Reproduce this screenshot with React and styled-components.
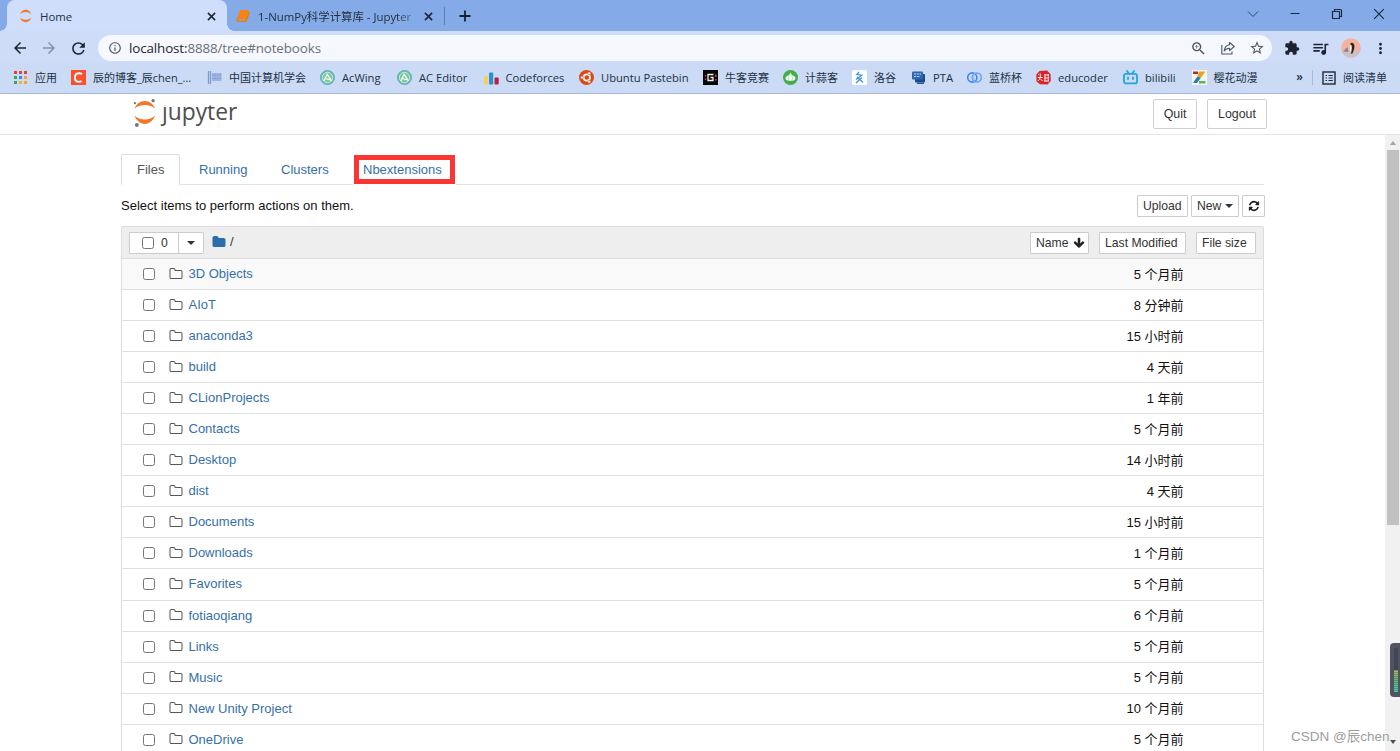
import React from "react";
import styled, { createGlobalStyle } from "styled-components";
import {
  MdArrowBack,
  MdArrowForward,
  MdRefresh,
  MdInfoOutline,
  MdZoomIn,
  MdStarBorder,
  MdExtension,
  MdQueueMusic,
  MdMoreVert,
} from "react-icons/md";

const GlobalStyle = createGlobalStyle`
  *, *::before, *::after { box-sizing: border-box; }
  body { margin: 0; background: #fff; overflow: hidden; }
  svg { display: block; flex: none; }
`;

const uiFont = `"Open Sans", "Noto Sans CJK SC", sans-serif`;
const pageFont = `"Liberation Sans", "Noto Sans CJK SC", sans-serif`;

const Window = styled.div`
  position: relative;
  display: flex;
  flex-direction: column;
  width: 1400px;
  height: 751px;
  overflow: hidden;
  background: #fff;
  font-family: ${uiFont};
  color: #22303f;
`;

/* ---------- tab strip ---------- */

const TabStrip = styled.div`
  display: flex;
  height: 31px;
  flex: none;
  background: #84abe8;
  padding-left: 7px;
`;

const Tab = styled.div`
  position: relative;
  display: flex;
  align-items: center;
  width: ${(p) => p.$width}px;
  height: 31px;
  padding: 1px 11px 0 ${(p) => (p.$active ? 11 : 9)}px;
  border-radius: 8px 8px 0 0;
  background: ${(p) => (p.$active ? "#cfdefa" : "transparent")};
  font-size: 11.4px;
  &::before, &::after {
    content: "";
    display: ${(p) => (p.$active ? "block" : "none")};
    position: absolute;
    bottom: 0;
    width: 7px;
    height: 7px;
  }
  &::before { left: -7px; background: radial-gradient(circle at 0 0, transparent 6.5px, #cfdefa 7px); }
  &::after { right: -7px; background: radial-gradient(circle at 100% 0, transparent 6.5px, #cfdefa 7px); }
`;

const TabTitle = styled.span`
  flex: 1;
  margin-left: ${(p) => p.$gap}px;
  white-space: nowrap;
  ${(p) => p.$fade && "mask-image: linear-gradient(90deg, #000 84%, transparent 99%);"}
`;

const TabDivider = styled.div`
  width: 1px;
  height: 18px;
  margin: 7px 14px 0 0;
  background: #5f7ba8;
`;

const NewTab = styled.div`
  padding-top: 10px;
`;

const WindowControls = styled.div`
  display: flex;
  margin-left: auto;
  gap: 30px;
  padding: 8px 15px 0 0;
`;

/* ---------- toolbar ---------- */

const Toolbar = styled.div`
  display: flex;
  align-items: center;
  height: 32px;
  flex: none;
  padding: 2px 11px 0 11px;
  background: #cedcf8;
`;

const NavButtons = styled.div`
  display: flex;
  align-items: center;
  gap: 11px;
  width: 87px;
  flex: none;
`;

const Omnibox = styled.div`
  display: flex;
  align-items: center;
  width: 1174px;
  flex: none;
  height: 26px;
  padding: 0 7px 0 10px;
  border-radius: 13px;
  background: #f5f8ff;
`;

const Url = styled.div`
  flex: 1;
  margin-left: 7px;
  padding-bottom: 1px;
  font-size: 13.4px;
  letter-spacing: -0.12px;
  color: #6a7079;
  span { color: #1f262e; }
`;

const OmniActions = styled.div`
  display: flex;
  align-items: center;
  gap: 13px;
  color: #4b5563;
`;

const ToolbarActions = styled.div`
  display: flex;
  align-items: center;
  margin-left: 12px;
  gap: 11px;
  color: #1d2430;
`;

/* ---------- bookmarks ---------- */

const BookmarkBar = styled.div`
  display: flex;
  align-items: center;
  height: 31px;
  flex: none;
  padding: 0 13px 1px 13px;
  background: #cbdbf5;
  border-bottom: 1px solid #a5b9da;
`;

const BookmarkItem = styled.div`
  display: flex;
  align-items: center;
  width: ${(p) => p.$width}px;
  flex: none;
  gap: 7px;
  white-space: nowrap;
`;

const BookmarkLabel = styled.span`
  font-size: ${(p) => (p.$cjk ? 11 : 11.2)}px;
  padding-bottom: ${(p) => (p.$cjk ? 2 : 0)}px;
`;

const BarEnd = styled.div`
  display: flex;
  align-items: center;
  margin-left: auto;
`;

const More = styled.span`
  font-size: 12px;
  font-weight: 600;
  padding-bottom: 3px;
  margin-right: 9px;
`;

const BarDivider = styled.span`
  width: 1px;
  height: 15px;
  margin-right: 9px;
  background: #a4bade;
`;

/* ---------- notebook page ---------- */

const PageHeader = styled.header`
  display: flex;
  align-items: flex-start;
  height: 41px;
  flex: none;
  padding: 5px 133px 0 132px;
  border-bottom: 1px solid #e4e4e4;
`;

const Wordmark = styled.div`
  margin: -4px 0 0 5px;
  font: 500 22.8px/34px "Open Sans", sans-serif;
  color: #4e4e4e;
  clip-path: inset(10.5px 0 0 -4px);
`;

const LogoSlot = styled.div`
  margin-top: -1px;
`;

const HeaderButtons = styled.div`
  display: flex;
  gap: 10px;
  margin-left: auto;
`;

const HeaderButton = styled.button`
  width: ${(p) => p.$width}px;
  height: 30px;
  padding: 0 0 1px;
  border: 1px solid #d0d0d0;
  border-radius: 2px;
  background: #fff;
  color: #333;
  font: 12.4px ${pageFont};
`;

const Content = styled.main`
  display: flex;
  flex-direction: column;
  flex: 1;
  min-height: 0;
  width: 1143px;
  margin-left: 121px;
  padding-top: 19px;
  font: 13px ${pageFont};
`;

const NavTabs = styled.nav`
  display: flex;
  flex: none;
  height: 31px;
  border-bottom: 1px solid #e2e2e2;
`;

const NavTab = styled.a`
  display: flex;
  align-items: center;
  width: ${(p) => p.$width}px;
  height: 31px;
  padding-left: 15px;
  margin-right: 3px;
  border: 1px solid ${(p) => (p.$active ? "#ddd" : "transparent")};
  border-bottom-color: ${(p) => (p.$active ? "#fff" : "transparent")};
  border-radius: 2px 2px 0 0;
  color: ${(p) => (p.$active ? "#555" : "#3670a9")};
`;

const Highlight = styled.a`
  display: flex;
  align-items: center;
  width: 101px;
  height: 29px;
  margin: 1px 0 0 8px;
  padding-left: 4px;
  border: 5px solid #fa3532;
  outline: 1px solid #fff;
  background: #fff;
  color: #3670a9;
  white-space: nowrap;
`;

const ActionRow = styled.div`
  display: flex;
  flex: none;
  align-items: center;
  height: 41px;
  color: #111;
`;

const ButtonGroup = styled.div`
  display: flex;
  gap: ${(p) => p.$gap}px;
  margin-left: auto;
  margin-right: ${(p) => p.$shift || 0}px;
`;

const SmallButton = styled.button`
  display: flex;
  align-items: center;
  gap: 4px;
  width: ${(p) => p.$width}px;
  height: 22px;
  padding: 0 0 0 5px;
  border: 1px solid #ccc;
  border-radius: 1px;
  background: #fff;
  color: #333;
  font: 12.2px ${pageFont};
  white-space: nowrap;
`;

const Caret = styled.i`
  border: 4px solid transparent;
  border-top-color: #333;
  border-bottom: 0;
`;

const List = styled.div`
  flex: 1;
  min-height: 0;
  overflow: hidden;
  border: 1px solid #ddd;
  border-bottom: 0;
  border-radius: 2px 2px 0 0;
`;

const ListHeader = styled.div`
  display: flex;
  align-items: center;
  height: 32px;
  padding: 0 7px;
  background: #eee;
  border-bottom: 1px solid #ddd;
`;

const SelectGroup = styled.div`
  display: flex;
  width: 75px;
  height: 22px;
  border: 1px solid #ccc;
  border-radius: 1px;
  background: #fff;
  font-size: 12.2px;
  color: #333;
`;

const SelectAll = styled.div`
  display: flex;
  align-items: center;
  gap: 7px;
  width: 49px;
  padding-left: 12px;
  border-right: 1px solid #ccc;
`;

const SelectToggle = styled.div`
  display: flex;
  flex: 1;
  align-items: center;
  justify-content: center;
`;

const Crumbs = styled.div`
  display: flex;
  align-items: center;
  gap: 4px;
  margin-left: 8px;
  padding-bottom: 2px;
  color: #333;
`;

const CheckBox = styled.span`
  width: 12px;
  height: 12px;
  flex: none;
  border: 1px solid #767676;
  border-radius: 2.5px;
  background: #fff;
`;

const Row = styled.div`
  display: flex;
  align-items: center;
  height: 31.06px;
  padding: 0 79.5px 0 21px;
  background: ${(p) => (p.$hover ? "#f9f9f9" : "#fff")};
  border-bottom: 1px solid #e0e0e0;
`;

const RowIcon = styled.span`
  margin: 0 5.5px 1px 14px;
`;

const RowName = styled.a`
  padding-bottom: 1px;
  color: #3670a9;
`;

const RowTime = styled.span`
  margin-left: auto;
  padding-bottom: 2px;
  color: #111;
`;

/* ---------- overlays ---------- */

const ScrollTrack = styled.div`
  position: absolute;
  top: 135px;
  right: 0;
  width: 15px;
  height: 616px;
  display: flex;
  flex-direction: column;
  align-items: center;
  background: #f1f1f1;
`;

const ScrollArrow = styled.i`
  margin: ${(p) => (p.$down ? "auto 0 7px" : "6px 0 5px")};
  border: 3.5px solid transparent;
  ${(p) => (p.$down
    ? "border-top: 4px solid #505050; border-bottom: 0;"
    : "border-bottom: 4px solid #a3a3a3; border-top: 0;")}
`;

const ScrollThumb = styled.div`
  width: 12px;
  height: 375px;
  background: #c1c1c1;
`;

const Meter = styled.div`
  position: absolute;
  top: 643px;
  right: 0;
  width: 10px;
  height: 54px;
  padding: 5px 2px 5px 4px;
  border-radius: 4px 0 0 4px;
  background: #50545f;
`;

const MeterBar = styled.div`
  height: 44px;
  background:
    repeating-linear-gradient(0deg, transparent 0 1px, rgba(60, 64, 78, 0.35) 1px 2px),
    linear-gradient(180deg, #42465a 50%, #b3b95c 50%, #62b77e 72%, #49cba8 100%);
`;

const Watermark = styled.div`
  position: absolute;
  left: 1291px;
  top: 727px;
  font: 13.5px/20px ${pageFont};
  color: #9c9c9c;
  text-shadow: 0 0 1px #fff;
  white-space: nowrap;
`;

/* ---------- drawings ---------- */

const JupyterMark = ({ width, height, moons }) => (
  <svg width={width} height={height} viewBox="0 0 24 28">
    <path d="M2.500 10.300C4 5.800 7.800 2.900 12.300 2.900s8.300 2.900 9.800 7.400C19.800 8 16.200 6.800 12.300 6.800S4.800 8 2.500 10.300Z" fill="#f37726" />
    <path d="M2.500 17.200C4 21.700 7.800 25 12.300 25s8.300-3.300 9.800-7.800c-2.300 2.300-5.900 3.500-9.800 3.500S4.800 19.500 2.500 17.200Z" fill="#f37726" />
    {moons && (
      <g fill="#767677">
        <circle cx="20.300" cy="2.600" r="1.600" />
        <circle cx="2.700" cy="5" r="1.100" />
        <circle cx="4.600" cy="26" r="1.900" />
      </g>
    )}
  </svg>
);

const BookIcon = () => (
  <svg width="14" height="14" viewBox="0 0 14 14">
    <path d="M4 1h9l-2.500 9.500H2Q1 10.500 1.300 9.300Z" fill="#f58316" />
    <path d="M1.200 9.500Q.6 12.300 2.500 12.300H10l3.300-9" fill="none" stroke="#e57c15" strokeWidth="1.500" />
  </svg>
);

const Cross = ({ size, weight }) => (
  <svg width={size} height={size} viewBox="0 0 10 10">
    <path d="M1 1 9 9M9 1 1 9" stroke="#1b2532" strokeWidth={weight} />
  </svg>
);

const ShareIcon = () => (
  <svg width="16" height="16" viewBox="0 0 16 16" fill="none" stroke="currentColor" strokeWidth="1.100" strokeLinejoin="round">
    <path d="M1.800 5V14H12V11.500" />
    <path d="M9.500 2.500 14.300 6.500 9.500 10.500V8.200C7 8.200 5.500 9 4.200 11 4.500 7.500 6.500 5.200 9.500 4.800Z" />
  </svg>
);

const Avatar = () => (
  <svg width="20" height="20" viewBox="0 0 20 20">
    <circle cx="10" cy="10" r="9.800" fill="#f4b29c" />
    <path d="M1 14 7 8.500 8 14 13 13 19.200 12.500A9.800 9.800 0 0 1 5 18.500Z" fill="#c9c2c6" />
    <path d="M2 13.500 6.500 9 7.500 14Z" fill="#94808a" />
    <path d="M9 6Q11 3.500 12.800 6T11.500 15.500L9.800 15.800Q11.800 9.500 10.500 7Z" fill="#2b2325" />
    <path d="M8.800 7.500Q10.500 7 10.300 10T9 14.500Z" fill="#fff" />
  </svg>
);

const FA = {
  folderOpen: "M1600 1312v-704q0-40-28-68t-68-28h-704q-40 0-68-28t-28-68v-64q0-40-28-68t-68-28h-320q-40 0-68 28t-28 68v960q0 40 28 68t68 28h1216q40 0 68-28t28-68zm128-704v704q0 92-66 158t-158 66h-1216q-92 0-158-66t-66-158v-960q0-92 66-158t158-66h320q92 0 158 66t66 158v32h672q92 0 158 66t66 158z",
  folder: "M1728 608v704q0 92-66 158t-158 66h-1216q-92 0-158-66t-66-158v-960q0-92 66-158t158-66h320q92 0 158 66t66 158v32h672q92 0 158 66t66 158z",
  arrowDown: "M1675 832q0 53-37 90l-651 652q-39 37-91 37-53 0-90-37l-651-652q-38-36-38-90 0-53 38-91l74-75q39-37 91-37 53 0 90 37l294 294v-704q0-52 38-90t90-38h128q52 0 90 38t38 90v704l294-294q37-37 90-37 52 0 91 37l75 75q37 39 37 91z",
  refresh: "M1639 1056q0 5-1 7-64 268-268 434.500t-478 166.500q-146 0-282.500-55t-243.500-157l-129 129q-19 19-45 19t-45-19-19-45v-448q0-26 19-45t45-19h448q26 0 45 19t19 45-19 45l-137 137q71 66 161 102t187 36q134 0 250-65t186-179q11-17 53-117 8-23 30-23h192q13 0 22.500 9.500t9.500 22.500zm25-800v448q0 26-19 45t-45 19h-448q-26 0-45-19t-19-45 19-45l138-138q-148-137-349-137-134 0-250 65t-186 179q-11 17-53 117-8 23-30 23h-199q-13 0-22.500-9.500t-9.500-22.500v-7q65-268 270-434.500t480-166.500q146 0 284 55.500t245 156.500l130-129q19-19 45-19t45 19 19 45z",
};

const Glyph = ({ name, size, color }) => (
  <svg width={size} height={size} viewBox="0 0 1792 1792">
    <path d={FA[name]} fill={color} />
  </svg>
);

const siteIcons = {
  apps: (
    <g>
      {["#e0433a", "#e0433a", "#e0433a", "#37a852", "#3f83f0", "#f2a529", "#37a852", "#f2b22b", "#f2a529"].map((c, i) => (
        <rect key={i} x={1 + (i % 3) * 5} y={1 + Math.floor(i / 3) * 5} width="3" height="3" fill={c} />
      ))}
    </g>
  ),
  csdn: (
    <g>
      <rect width="15" height="15" fill="#f9502d" />
      <path d="M11 4.300Q9.800 3.300 8.200 3.300C5.500 3.300 4 5 3.900 7.500S5.300 11.800 7.700 11.800Q9.500 11.800 10.600 10.900" fill="none" stroke="#fff" strokeWidth="1.900" />
    </g>
  ),
  ccf: (
    <g>
      <path d="M1.500 1V14M3.500 1V14" stroke="#7f9acb" strokeWidth="1.300" />
      <rect x="5" y="3" width="9.500" height="8" fill="#9db4e2" />
      <path d="M5 5H14M5 8.500H14" stroke="#7d98d0" strokeDasharray="1.500 1" />
    </g>
  ),
  acwing: (
    <g>
      <circle cx="7.500" cy="7.500" r="7" fill="#64bf9a" stroke="#69a6cf" />
      <circle cx="7.500" cy="7.500" r="5.200" fill="#79c99b" stroke="#d9f3e6" strokeWidth=".8" />
      <path d="M3.800 11 7.200 4.200 10.800 9.800M5.500 8.500 12 10.500" fill="none" stroke="#fff" strokeWidth="1.300" />
    </g>
  ),
  codeforces: (
    <g>
      <rect x="0" y="6" width="4" height="8.500" rx="1" fill="#f9cf58" />
      <rect x="5" y="2.500" width="4.200" height="12" rx="1" fill="#2c8fd1" />
      <rect x="10.500" y="7.500" width="4.200" height="7" rx="1" fill="#b9213c" />
    </g>
  ),
  ubuntu: (
    <g>
      <circle cx="7.500" cy="7.500" r="7.500" fill="#dd4814" />
      <circle cx="7.800" cy="7.500" r="3.200" fill="none" stroke="#fff" strokeWidth="1.700" />
      <g fill="#fff" stroke="#dd4814" strokeWidth=".6">
        <circle cx="3" cy="7.500" r="1.500" />
        <circle cx="10.200" cy="3.300" r="1.500" />
        <circle cx="10.200" cy="11.700" r="1.500" />
      </g>
    </g>
  ),
  nowcoder: (
    <g>
      <rect width="15" height="15" fill="#080808" />
      <path d="M10.500 4.500H5V10.500H10V7.500H7.500" fill="none" stroke="#f1eeee" strokeWidth="1.300" />
      <path d="M2.500 5V6.500M2.500 8.500V10M12.800 4.500V7M12.800 9V10.500" stroke="#d94b55" strokeWidth="1.300" />
    </g>
  ),
  jisuanke: (
    <g>
      <circle cx="7.500" cy="7.500" r="7.500" fill="#43ae49" />
      <path d="M7.500 2.500Q8 5 10.500 5.700 13.200 6.800 12.200 9.200C11 11.500 4 11.500 2.800 9.200Q1.800 6.800 4.500 5.700 7 5 7.500 2.500Z" fill="#f2fff2" />
      <path d="M6 5.500Q4.800 8 6 10.800M9 5.500Q10.200 8 9 10.800" fill="none" stroke="#9fd8a2" strokeWidth=".6" />
    </g>
  ),
  luogu: (
    <g>
      <rect width="15" height="15" rx="1.500" fill="#fbfdff" />
      <path d="M7 2 4.800 4.500 9.800 5.200 4 9.500M5 7 11 12.500M9.800 7.500 4 13" fill="none" stroke="#3f8ed8" strokeWidth="1.200" />
    </g>
  ),
  pta: (
    <g>
      <rect x="4" y="4" width="10" height="8.500" rx="1" fill="#1f4c86" />
      <rect x="1" y="1.500" width="11" height="8" rx="1" fill="#2e68ae" />
      <path d="M3 4H10M3 6.500H9" stroke="#c8dcf6" strokeDasharray="2 .8" />
      <path d="M6 12.500H13V14H6Z" fill="#255a9e" />
    </g>
  ),
  lanqiao: (
    <g fill="none" strokeWidth="1.600">
      <circle cx="5.300" cy="7.500" r="4.600" stroke="#3e86ef" />
      <circle cx="9.800" cy="7.500" r="4.500" stroke="#66a3f6" />
      <path d="M7.500 3.500Q5.500 7.500 7.500 11.500" stroke="#8db9f8" strokeWidth="1" />
    </g>
  ),
  educoder: (
    <g>
      <path d="M3.500 1 11 .5 14.500 4 14.800 11 11.500 14.500 4 14.300.500 11.500.300 4.500Z" fill="#dc2328" />
      <path d="M4.300 3.500V7Q4 9.500 1.800 11M1.800 7.500H6.800M4.800 9.200 6.500 11M2.200 4 3.200 5M8 5H13M8 8H13M8 11H13M9 4V11.500M12.300 4V11.500" fill="none" stroke="#fff" strokeWidth=".9" />
    </g>
  ),
  bilibili: (
    <g fill="none" stroke="#22a5dc" strokeWidth="1.800" strokeLinecap="round">
      <rect x="1" y="3.800" width="13" height="9.600" rx="2" />
      <path d="M4 1 5.500 3M11 1 9.500 3M5 7.500V9M10 7.500V9" />
    </g>
  ),
  anime: (
    <g>
      <rect width="15" height="15" fill="#f6f5ea" />
      <path d="M1 1.500H6V4H1Z" fill="#b42b33" />
      <path d="M7 1.500H13.500L9 7.500H5Z" fill="#e2a624" />
      <path d="M5 7 9 7.500 5 13H1Z" fill="#257fb4" />
      <path d="M7 11H13.500V13.500H7Z" fill="#5fb25a" />
    </g>
  ),
};

const bookmarks = [
  { icon: "apps", label: "应用", width: 58, cjk: true },
  { icon: "csdn", label: "辰的博客_辰chen_...", width: 136, cjk: true },
  { icon: "ccf", label: "中国计算机学会", width: 113, cjk: true },
  { icon: "acwing", label: "AcWing", width: 77 },
  { icon: "acwing", label: "AC Editor", width: 86.5 },
  { icon: "codeforces", label: "Codeforces", width: 95.5 },
  { icon: "ubuntu", label: "Ubuntu Pastebin", width: 124 },
  { icon: "nowcoder", label: "牛客竞赛", width: 80, cjk: true },
  { icon: "jisuanke", label: "计蒜客", width: 69, cjk: true },
  { icon: "luogu", label: "洛谷", width: 59, cjk: true },
  { icon: "pta", label: "PTA", width: 56 },
  { icon: "lanqiao", label: "蓝桥杯", width: 69, cjk: true },
  { icon: "educoder", label: "educoder", width: 87 },
  { icon: "bilibili", label: "bilibili", width: 68.5 },
  { icon: "anime", label: "樱花动漫", width: 70, cjk: true },
];

const files = [
  ["3D Objects", "5 个月前"],
  ["AIoT", "8 分钟前"],
  ["anaconda3", "15 小时前"],
  ["build", "4 天前"],
  ["CLionProjects", "1 年前"],
  ["Contacts", "5 个月前"],
  ["Desktop", "14 小时前"],
  ["dist", "4 天前"],
  ["Documents", "15 小时前"],
  ["Downloads", "1 个月前"],
  ["Favorites", "5 个月前"],
  ["fotiaoqiang", "6 个月前"],
  ["Links", "5 个月前"],
  ["Music", "5 个月前"],
  ["New Unity Project", "10 个月前"],
  ["OneDrive", "5 个月前"],
];

export default function App() {
  return (
    <Window>
      <GlobalStyle />
      <TabStrip>
        <Tab $active $width={220}>
          <JupyterMark width={15} height={16} />
          <TabTitle $gap={7}>Home</TabTitle>
          <Cross size={9} weight={1.7} />
        </Tab>
        <Tab $width={217}>
          <BookIcon />
          <TabTitle $gap={8} $fade>1-NumPy科学计算库 - Jupyter</TabTitle>
          <Cross size={9} weight={1.7} />
        </Tab>
        <TabDivider />
        <NewTab>
          <svg width="12" height="12" viewBox="0 0 12 12">
            <path d="M6 .5V11.500M.5 6H11.500" stroke="#17202c" strokeWidth="1.800" />
          </svg>
        </NewTab>
        <WindowControls>
          <svg width="12" height="12" viewBox="0 0 12 12"><path d="M1 3.500 6 8.500 11 3.500" fill="none" stroke="#2c456d" strokeWidth="1" /></svg>
          <svg width="12" height="12" viewBox="0 0 12 12"><path d="M1.500 5.500H10.500" stroke="#1c2a40" /></svg>
          <svg width="12" height="12" viewBox="0 0 12 12">
            <path d="M1.500 3.500H8.500V10.500H1.500ZM3.500 3V1.500H9.500Q10.500 1.500 10.500 2.500V8.500H9" fill="none" stroke="#1c2a40" strokeWidth="1.200" />
          </svg>
          <Cross size={12} weight={0.9} />
        </WindowControls>
      </TabStrip>

      <Toolbar>
        <NavButtons>
          <MdArrowBack size={18} color="#1d2430" />
          <MdArrowForward size={18} color="#8392ad" />
          <MdRefresh size={19} color="#1d2430" />
        </NavButtons>
        <Omnibox>
          <MdInfoOutline size={14} color="#4b5563" />
          <Url><span>localhost:</span>8888/tree#notebooks</Url>
          <OmniActions>
            <MdZoomIn size={17} />
            <ShareIcon />
            <MdStarBorder size={16} />
          </OmniActions>
        </Omnibox>
        <ToolbarActions>
          <MdExtension size={16} />
          <MdQueueMusic size={19} />
          <Avatar />
          <MdMoreVert size={17} />
        </ToolbarActions>
      </Toolbar>

      <BookmarkBar>
        {bookmarks.map((b) => (
          <BookmarkItem key={b.label} $width={b.width}>
            <svg width="15" height="15" viewBox="0 0 15 15">{siteIcons[b.icon]}</svg>
            <BookmarkLabel $cjk={b.cjk}>{b.label}</BookmarkLabel>
          </BookmarkItem>
        ))}
        <BarEnd>
          <More>»</More>
          <BarDivider />
          <BookmarkItem $width={65}>
            <svg width="14" height="14" viewBox="0 0 14 14">
              <rect x="1" y="1" width="12" height="12" fill="none" stroke="#1e2938" strokeWidth="1.400" />
              <path d="M3.500 4.500H5M3.500 7H5M3.500 9.500H5M6.500 4.500H10.800M6.500 7H10.800M6.500 9.500H10.800" stroke="#1e2938" strokeWidth="1.100" />
            </svg>
            <BookmarkLabel $cjk>阅读清单</BookmarkLabel>
          </BookmarkItem>
        </BarEnd>
      </BookmarkBar>

      <PageHeader>
        <LogoSlot><JupyterMark width={25} height={29} moons /></LogoSlot>
        <Wordmark>jupyter</Wordmark>
        <HeaderButtons>
          <HeaderButton $width={44}>Quit</HeaderButton>
          <HeaderButton $width={60}>Logout</HeaderButton>
        </HeaderButtons>
      </PageHeader>

      <Content>
        <NavTabs>
          <NavTab $active $width={59}>Files</NavTab>
          <NavTab $width={79}>Running</NavTab>
          <NavTab $width={78}>Clusters</NavTab>
          <Highlight>Nbextensions</Highlight>
        </NavTabs>
        <ActionRow>
          Select items to perform actions on them.
          <ButtonGroup $gap={3} $shift={-1}>
            <SmallButton $width={51}>Upload</SmallButton>
            <SmallButton $width={48}>New <Caret /></SmallButton>
            <SmallButton $width={23}><Glyph name="refresh" size={12} color="#222" /></SmallButton>
          </ButtonGroup>
        </ActionRow>
        <List>
          <ListHeader>
            <SelectGroup>
              <SelectAll><CheckBox />0</SelectAll>
              <SelectToggle><Caret /></SelectToggle>
            </SelectGroup>
            <Crumbs><Glyph name="folder" size={14} color="#2a6eac" />/</Crumbs>
            <ButtonGroup $gap={10}>
              <SmallButton $width={59}>Name <Glyph name="arrowDown" size={12} color="#222" /></SmallButton>
              <SmallButton $width={87}>Last Modified</SmallButton>
              <SmallButton $width={60}>File size</SmallButton>
            </ButtonGroup>
          </ListHeader>
          {files.map(([name, time], i) => (
            <Row key={name} $hover={i === 0}>
              <CheckBox />
              <RowIcon><Glyph name="folderOpen" size={14} color="#555" /></RowIcon>
              <RowName>{name}</RowName>
              <RowTime>{time}</RowTime>
            </Row>
          ))}
        </List>
      </Content>

      <ScrollTrack>
        <ScrollArrow />
        <ScrollThumb />
        <ScrollArrow $down />
      </ScrollTrack>
      <Meter><MeterBar /></Meter>
      <Watermark>CSDN @辰chen</Watermark>
    </Window>
  );
}
